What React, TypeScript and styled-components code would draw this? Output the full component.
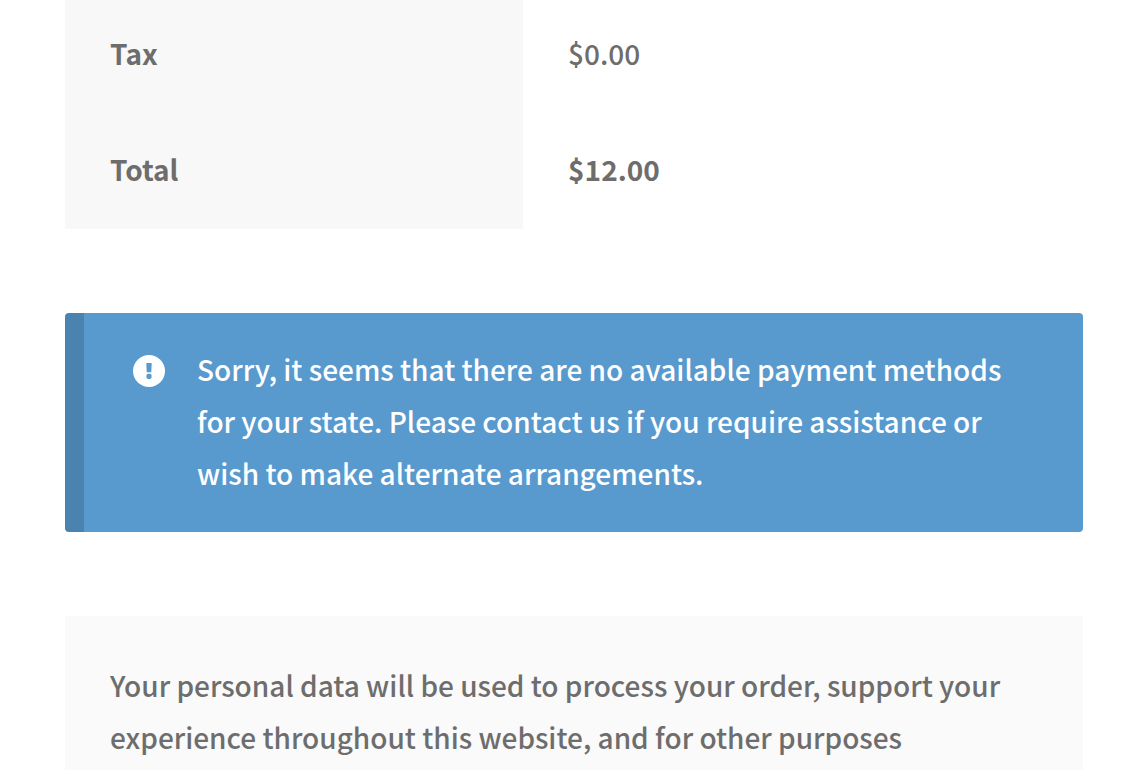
import React from "react";
import styled, { createGlobalStyle } from "styled-components";

const Global = createGlobalStyle`
  * { box-sizing: border-box; }
  body {
    margin: 0;
    background: #ffffff;
    color: #6d6d6d;
    font-family: "Noto Sans CJK SC", sans-serif;
    font-size: 28px;
    font-weight: 500;
    line-height: 52px;
  }
`;

const Page = styled.main`
  height: 100vh;
  overflow: hidden;
  padding: 0 49px 0 65px;
`;

const Totals = styled.table`
  width: 100%;
  margin-top: -3px;
  table-layout: fixed;
  border-collapse: collapse;
  text-align: left;
`;

const Label = styled.th`
  width: 45%;
  padding: 30px 45px 34px;
  background: #f8f8f8;
  font-weight: 700;
`;

const Amount = styled.td<{ $strong?: boolean }>`
  padding: 30px 45px 34px;
  font-weight: ${(p) => (p.$strong ? 700 : 500)};
`;

const Notice = styled.div`
  display: flex;
  gap: 32px;
  margin: 84px 0;
  padding: 30px 64px 33px 49px;
  border-left: 19px solid #4a82b0;
  border-radius: 4px;
  background: #5899ce;
  color: #ffffff;
`;

const NoticeIcon = styled.svg`
  flex: none;
  width: 32px;
  height: 32px;
  margin-top: 12px;
`;

const Text = styled.p`
  margin: 0;
`;

const Privacy = styled.section`
  padding: 43px 45px;
  background: #fafafa;
`;

export default function App() {
  return (
    <>
      <Global />
      <Page>
        <Totals>
          <tbody>
            <tr>
              <Label scope="row">Tax</Label>
              <Amount>$0.00</Amount>
            </tr>
            <tr>
              <Label scope="row">Total</Label>
              <Amount $strong>$12.00</Amount>
            </tr>
          </tbody>
        </Totals>
        <Notice role="status">
          <NoticeIcon viewBox="0 0 32 32" aria-hidden="true">
            <circle cx="16" cy="16" r="16" fill="#ffffff" />
            <path d="M13.9 8h4.2q.6 0 .6.6l-.4 8.1q0 .6-.6.6h-3.4q-.6 0-.6-.6l-.4-8.1q0-.6.6-.6z" fill="#5899ce" />
            <rect x="13.4" y="18.7" width="5.2" height="5.3" rx="2" fill="#5899ce" />
          </NoticeIcon>
          <Text>
            Sorry, it seems that there are no available payment methods for your
            state. Please contact us if you require assistance or wish to make
            alternate arrangements.
          </Text>
        </Notice>
        <Privacy>
          <Text>
            Your personal data will be used to process your order, support your
            experience throughout this website, and for other purposes
          </Text>
        </Privacy>
      </Page>
    </>
  );
}
